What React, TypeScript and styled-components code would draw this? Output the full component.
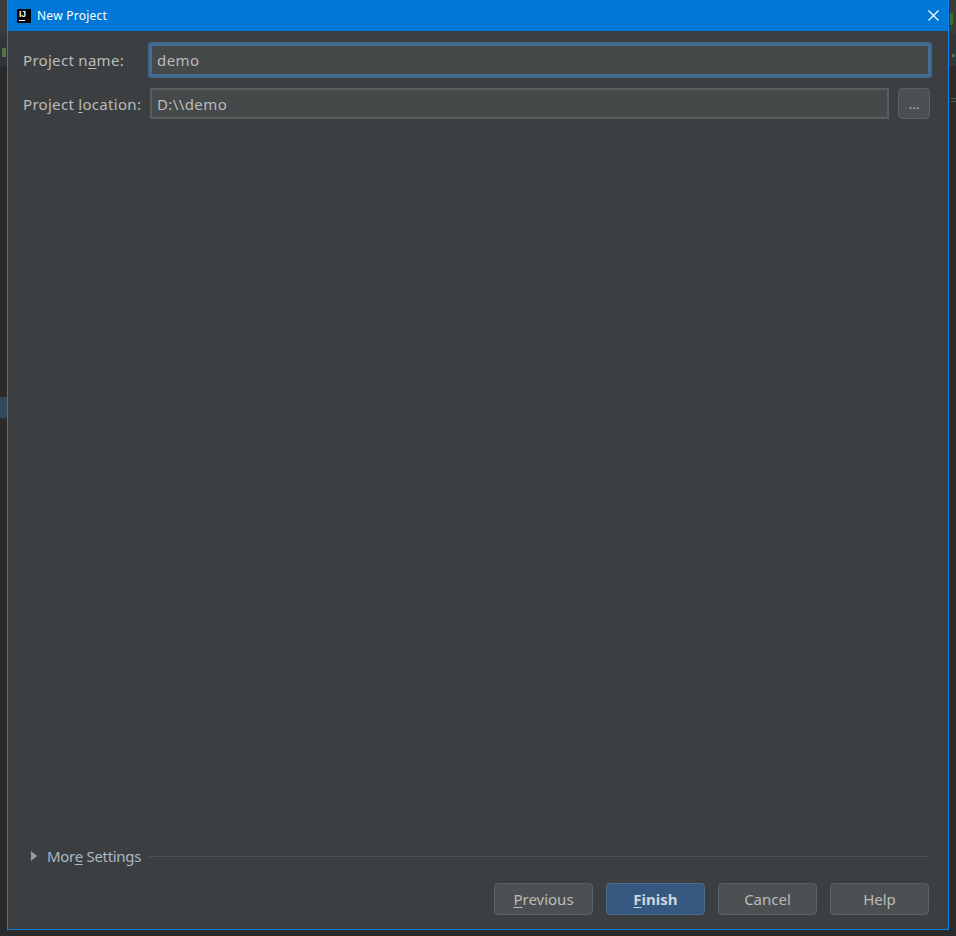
import styled, { createGlobalStyle } from 'styled-components'

const GlobalStyle = createGlobalStyle`
  html, body {
    margin: 0;
    padding: 0;
    background: #2b2b2b;
  }
  body {
    font-family: "Noto Sans", "Open Sans", sans-serif;
  }
`

const Page = styled.div`
  width: 956px;
  height: 936px;
  overflow: hidden;
  position: relative;
  background: #2b2b2b;
  padding: 0 7px 6px 7px;
  box-sizing: border-box;
`

// bits of the IDE window showing behind the dialog
const BackdropBit = styled.div<{ $side: 'left' | 'right'; $top: number; $height: number; $color: string; $width?: number; $inset?: number }>`
  position: absolute;
  ${p => p.$side}: ${p => p.$inset ?? 0}px;
  top: ${p => p.$top}px;
  height: ${p => p.$height}px;
  width: ${p => p.$width ?? 7}px;
  background: ${p => p.$color};
`

const Window = styled.div`
  height: 930px;
  display: flex;
  flex-direction: column;
  box-sizing: border-box;
  border: 1px solid #1281de;
  border-top: none;
  background: #3c3f41;
  position: relative;
`

const TitleBar = styled.div`
  height: 31px;
  flex: none;
  display: flex;
  align-items: center;
  background: #0078d7;
  padding: 0 8px 0 9px;
  color: #ffffff;
  font-size: 12px;
  letter-spacing: 0.25px;
`

const AppIcon = styled.div`
  width: 14px;
  height: 14px;
  background: #000000;
  color: #ffffff;
  font-family: "Liberation Sans", sans-serif;
  font-size: 8.5px;
  font-weight: 700;
  line-height: 10px;
  letter-spacing: 0;
  padding-left: 2px;
  box-sizing: border-box;
  margin-right: 6px;
  position: relative;

  &::after {
    content: '';
    position: absolute;
    left: 2px;
    bottom: 2px;
    width: 6px;
    height: 1px;
    background: #ffffff;
  }
`

const Title = styled.span`
  flex: 1;
`

const CloseIcon = styled.svg`
  width: 11px;
  height: 11px;
  margin-right: 1px;
`

const Body = styled.div`
  flex: 1;
  display: flex;
  flex-direction: column;
  padding: 13px 18px 14px 15px;
  color: #bbbbbb;
  font-size: 15px;
`

const FormRow = styled.div`
  display: flex;
  align-items: flex-start;
  height: 32px;
  margin-bottom: 12px;
`

const Label = styled.label`
  width: 127px;
  flex: none;
  line-height: 32px;
  color: #bbbbbb;
  letter-spacing: 0.3px;
`

const Key = styled.span`
  text-decoration: underline;
  text-underline-offset: 2px;
`

const TextField = styled.div<{ $focused?: boolean }>`
  flex: 1;
  height: ${p => (p.$focused ? 32 : 31)}px;
  box-sizing: border-box;
  display: flex;
  align-items: center;
  background: #45494a;
  color: #bbbbbb;
  letter-spacing: 0.4px;
  padding-left: 5px;
  border: 2px solid ${p => (p.$focused ? '#466d94' : '#5b5e5f')};
  border-radius: ${p => (p.$focused ? 1 : 0)}px;
  box-shadow: ${p => (p.$focused ? '0 0 0 2px #40668b' : 'none')};
`

const BrowseButton = styled.div`
  width: 32px;
  height: 31px;
  flex: none;
  box-sizing: border-box;
  margin-left: 9px;
  display: flex;
  align-items: flex-end;
  justify-content: center;
  padding-bottom: 6px;
  background: #4c5052;
  border: 1px solid #5e6060;
  border-radius: 4px;
  font-size: 13px;
  line-height: 16px;
`

const Spacer = styled.div`
  flex: 1;
`

const MoreSettings = styled.div`
  display: flex;
  align-items: center;
  height: 20px;
  margin-bottom: 17px;
  padding: 0 1px 0 8px;
`

const Arrow = styled.span`
  width: 0;
  height: 0;
  border-left: 6px solid #9a9c9e;
  border-top: 5px solid transparent;
  border-bottom: 5px solid transparent;
  margin-right: 10px;
`

const MoreLabel = styled.span`
  color: #a9b7c6;
  letter-spacing: -0.3px;
`

const Divider = styled.div`
  flex: 1;
  height: 1px;
  background: #515151;
  margin-left: 8px;
`

const ButtonRow = styled.div`
  display: flex;
  justify-content: flex-end;
  gap: 13px;
  padding-right: 1px;
`

const Button = styled.div<{ $primary?: boolean }>`
  width: 99px;
  height: 32px;
  box-sizing: border-box;
  display: flex;
  align-items: center;
  justify-content: center;
  border-radius: 4px;
  background: ${p => (p.$primary ? '#365880' : '#4c5052')};
  border: 1px solid ${p => (p.$primary ? '#4c708c' : '#5e6060')};
  color: ${p => (p.$primary ? '#cdd5dd' : '#bbbbbb')};
  font-weight: ${p => (p.$primary ? 700 : 400)};
`

const App = () => {
  return (
    <>
      <GlobalStyle />
      <Page>
        <BackdropBit $side="left" $top={0} $height={35} $color="#3a3c3e" />
        <BackdropBit $side="left" $top={35} $height={31} $color="#333638" />
        <BackdropBit $side="left" $top={48} $height={9} $width={4} $inset={2} $color="#4f7548" />
        <BackdropBit $side="left" $top={397} $height={21} $color="#31495a" />
        <BackdropBit $side="right" $top={0} $height={33} $color="#3a3c3e" />
        <BackdropBit $side="right" $top={13} $height={12} $width={3} $inset={3} $color="#3f6b35" />
        <BackdropBit $side="right" $top={33} $height={33} $color="#333638" />
        <BackdropBit $side="right" $top={54} $height={3} $width={3} $inset={1} $color="#4f7548" />
        <BackdropBit $side="right" $top={98} $height={1} $width={5} $color="#55604a" />
        <BackdropBit $side="right" $top={101} $height={1} $width={5} $color="#55604a" />
        <Window>
          <TitleBar>
            <AppIcon>IJ</AppIcon>
            <Title>New Project</Title>
            <CloseIcon viewBox="0 0 11 11">
              <path d="M0.5 0.5L10.5 10.5M10.5 0.5L0.5 10.5" stroke="#fff" strokeWidth="1.2" fill="none" />
            </CloseIcon>
          </TitleBar>
          <Body>
            <FormRow>
              <Label>Project n<Key>a</Key>me:</Label>
              <TextField $focused>demo</TextField>
            </FormRow>
            <FormRow>
              <Label>Project <Key>l</Key>ocation:</Label>
              <TextField>D:\\demo</TextField>
              <BrowseButton>...</BrowseButton>
            </FormRow>
            <Spacer />
            <MoreSettings>
              <Arrow />
              <MoreLabel>Mor<Key>e</Key> Settings</MoreLabel>
              <Divider />
            </MoreSettings>
            <ButtonRow>
              <Button><span><Key>P</Key>revious</span></Button>
              <Button $primary><span><Key>F</Key>inish</span></Button>
              <Button>Cancel</Button>
              <Button>Help</Button>
            </ButtonRow>
          </Body>
        </Window>
      </Page>
    </>
  )
}

export default App
